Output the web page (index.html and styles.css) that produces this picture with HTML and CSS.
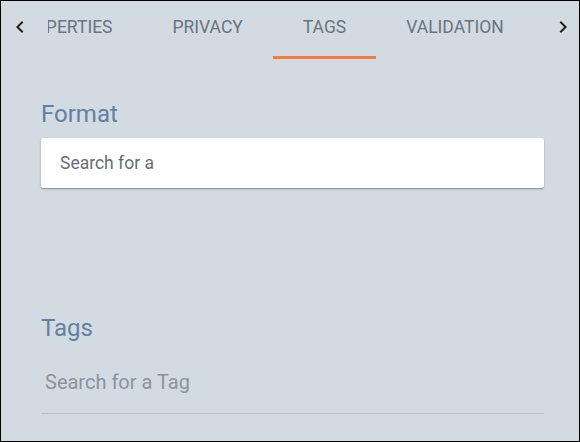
FILE: index.html
```html
<!DOCTYPE html>
<html>
<head>
<meta charset="utf-8">
<link rel="stylesheet" href="styles.css">
</head>
<body>
<div class="frame">
  <div class="tabbar">
    <div class="nav-btn nav-left">
      <svg width="24" height="24" viewBox="0 0 24 24"><path d="M15.41 7.41L14 6l-6 6 6 6 1.41-1.41L10.83 12z" fill="#222"/></svg>
    </div>
    <div class="viewport">
      <div class="track">
        <div class="tab">PROPERTIES</div>
        <div class="tab">PRIVACY</div>
        <div class="tab active">TAGS</div>
        <div class="tab">VALIDATION</div>
      </div>
    </div>
    <div class="nav-btn nav-right">
      <svg width="24" height="24" viewBox="0 0 24 24"><path d="M10 6L8.59 7.41 13.17 12l-4.58 4.59L10 18l6-6z" fill="#222"/></svg>
    </div>
  </div>
  <div class="content">
    <div class="section-label">Format</div>
    <div class="card-input"><span class="card-placeholder">Search for a</span></div>
    <div class="section-label tags-label">Tags</div>
    <div class="line-input"><span class="line-placeholder">Search for a Tag</span></div>
  </div>
</div>
</body>
</html>
```
FILE: styles.css
```css
html, body {
  margin: 0;
  padding: 0;
  background: #fff;
}
.frame {
  width: 580px;
  height: 442px;
  box-sizing: border-box;
  border: 1px solid #000;
  background: #d3dbe2;
  font-family: Roboto, "Liberation Sans", sans-serif;
  overflow: hidden;
}
.tabbar {
  display: flex;
  height: 58px;
}
.nav-btn {
  flex: none;
  display: flex;
  align-items: flex-start;
  padding-top: 14px;
  box-sizing: border-box;
}
.nav-left {
  width: 47px;
  padding-left: 7px;
}
.nav-right {
  width: 32px;
  padding-left: 4px;
}
.viewport {
  flex: 1;
  overflow: hidden;
}
.track {
  display: flex;
  margin-left: -66px;
}
.tab {
  flex: none;
  height: 58px;
  box-sizing: border-box;
  padding: 16px 30px 0;
  font-size: 17.5px;
  line-height: 20px;
  color: #6a747d;
}
.tab.active {
  border-bottom: 3px solid #f77b3c;
}
.content {
  padding: 41px 35px 0 40px;
}
.section-label {
  font-size: 24px;
  line-height: 28px;
  color: #62809f;
}
.card-input {
  margin-top: 10px;
  height: 50px;
  background: #fff;
  border-radius: 2px;
  box-shadow: 0 1px 2px rgba(0, 0, 0, 0.3), 0 1px 1px rgba(0, 0, 0, 0.1);
  display: flex;
  align-items: center;
  padding-left: 19px;
}
.card-placeholder {
  font-size: 17.5px;
  color: #666e75;
}
.tags-label {
  margin-top: 126px;
}
.line-input {
  margin-top: 28px;
  padding: 0 0 17px 4px;
  border-bottom: 1px solid #b6c0c8;
  line-height: 24px;
}
.line-placeholder {
  font-size: 20px;
  color: #8a949b;
}
```
